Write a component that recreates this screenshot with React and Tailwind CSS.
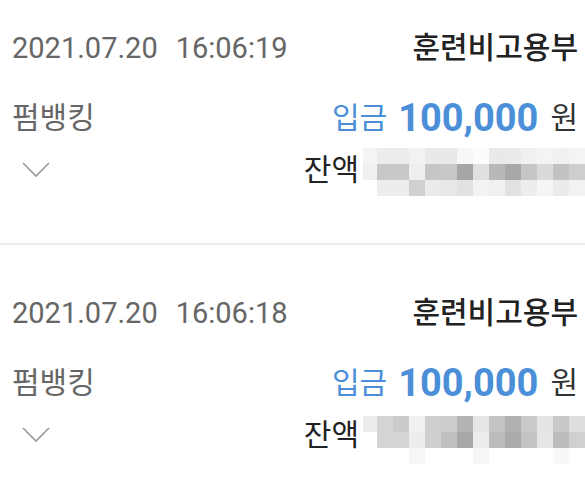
const font = { fontFamily: '"Roboto", "Noto Sans CJK KR", sans-serif' };

const items = [
  {
    date: "2021.07.20",
    time: "16:06:19",
    name: "훈련비고용부",
    method: "펌뱅킹",
    amount: "100,000",
    first: true,
    blurTop: 3,
    blur: [
      ["#f4f4f4", "#ececec", "#ececec", "#f2f2f2", "#e9e9e9", "#e9e9e9", "#f7f7f7", "#fcfcfc", "#e9e9e9", "#ebebeb", "#f0f0f0", "#f4f4f4", "#f1f1f1", "#f4f4f4"],
      ["#f0f0f0", "#c8c8c8", "#c8c8c8", "#eeeeee", "#c6c6c6", "#c8c8c8", "#a6a6a6", "#e0e0e0", "#b8b8b8", "#a8a8a8", "#c6c6c6", "#dadada", "#c2c2c2", "#cecece"],
      ["#ffffff", "#ededed", "#ededed", "#d0d0d0", "#ebebeb", "#e8e8e8", "#e2e2e2", "#f3f3f3", "#f0f0f0", "#e2e2e2", "#ededed", "#f5f5f5", "#ebebeb", "#f2f2f2"],
    ],
  },
  {
    date: "2021.07.20",
    time: "16:06:18",
    name: "훈련비고용부",
    method: "펌뱅킹",
    amount: "100,000",
    first: false,
    blurTop: 10,
    blur: [
      ["#ededed", "#d4d4d4", "#cbcbcb", "#f0f0f0", "#cfcfcf", "#cdcdcd", "#b4b4b4", "#e6e6e6", "#c4c4c4", "#b0b0b0", "#cacaca", "#e4e4e4", "#c8c8c8", "#dedede"],
      ["#ffffff", "#d4d4d4", "#d4d4d4", "#ededed", "#cfcfcf", "#c0c0c0", "#a8a8a8", "#ececec", "#bcbcbc", "#aaaaaa", "#c4c4c4", "#e6e6e6", "#bcbcbc", "#d0d0d0"],
      ["#ffffff", "#ffffff", "#ffffff", "#f6f6f6", "#ffffff", "#ffffff", "#ffffff", "#f6f6f6", "#ffffff", "#ffffff", "#ffffff", "#ffffff", "#f8f8f8", "#ffffff"],
    ],
  },
];

function Chevron() {
  return (
    <svg width="28" height="16" viewBox="0 0 28 16" fill="none">
      <polyline points="1,1 14,14 27,1" stroke="#9a9a9a" strokeWidth="1.6" />
    </svg>
  );
}

function Blurred({ rows, top }) {
  return (
    <div className="flex flex-col self-start ml-[4px]" style={{ marginTop: top }}>
      {rows.map((row, i) => (
        <div key={i} className="flex h-[16px]">
          {row.map((c, j) => (
            <div
              key={j}
              className={j === 0 ? "w-[14px] h-full" : "w-[16px] h-full shrink-0"}
              style={{ backgroundColor: c }}
            />
          ))}
        </div>
      ))}
    </div>
  );
}

function Item({ item }) {
  return (
    <div className={item.first ? "pt-[24px] pb-[43px] pl-[12px] pr-[7px]" : "pt-[44px] pl-[12px] pr-[7px]"}>
      <div className="flex h-[48px] items-center justify-between">
        <div className="text-[29px] text-[#666666] leading-none">
          <span>{item.date}</span>
          <span className="ml-[18px]">{item.time}</span>
        </div>
        <div className="text-[30px] font-medium text-[#222222] leading-none">{item.name}</div>
      </div>
      <div className="mt-[24px] flex h-[44px] items-center justify-between">
        <div className="text-[30px] text-[#666666] leading-none">{item.method}</div>
        <div className="flex items-center leading-none">
          <span className="text-[30px] text-[#4a8fd8]">입금</span>
          <span className="ml-[11px] text-[38px] font-bold text-[#4a8fd8]">{item.amount}</span>
          <span className="ml-[12px] text-[30px] text-[#333333]">원</span>
        </div>
      </div>
      <div className="flex h-[60px] items-center justify-between">
        <div className="pl-[10px]">
          <Chevron />
        </div>
        <div className="flex items-center -mr-[7px]">
          <span className="text-[30px] text-[#222222] leading-none">잔액</span>
          <Blurred rows={item.blur} top={item.blurTop} />
        </div>
      </div>
    </div>
  );
}

export default function App() {
  return (
    <div className="w-[585px] h-[496px] overflow-hidden bg-white" style={font}>
      <Item item={items[0]} />
      <div className="h-[2px] bg-[#ebebeb]" />
      <Item item={items[1]} />
    </div>
  );
}
